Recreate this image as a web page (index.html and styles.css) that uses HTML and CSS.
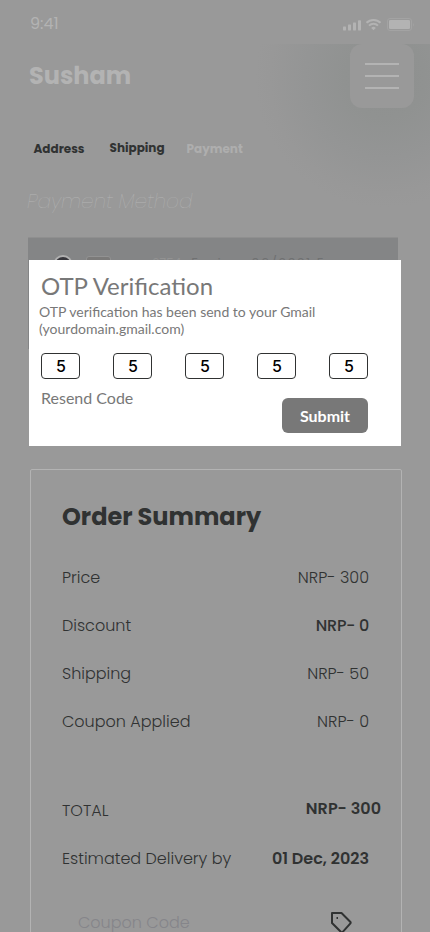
FILE: index.html
```html
<!DOCTYPE html>
<html lang="en">
<head>
<meta charset="utf-8">
<meta name="viewport" content="width=device-width, initial-scale=1">
<title>Susham – Payment</title>
<link rel="stylesheet" href="styles.css">
</head>
<body>
<div class="screen">
  <div class="status">
    <span class="time">9:41</span>
    <svg class="status-icons" width="72" height="16" viewBox="0 0 72 16" fill="#b3b3b3">
      <rect x="0" y="9.5" width="3" height="4" rx=".7"/>
      <rect x="5" y="7.5" width="3" height="6" rx=".7"/>
      <rect x="10" y="5.5" width="3" height="8" rx=".7"/>
      <rect x="15" y="3.3" width="3" height="10.200" rx=".7"/>
      <g fill="none" stroke="#b3b3b3" stroke-width="2">
        <path d="M23.500 5.800a10 10 0 0 1 14 0"/>
        <path d="M26 8.600a6.500 6.500 0 0 1 9 0"/>
      </g>
      <path d="M28.200 10.900a3.400 3.400 0 0 1 4.600 0L30.500 13.200z"/>
      <rect x="44.500" y="1.500" width="24" height="12" rx="2.500" fill="none" stroke="#a3a3a3"/>
      <rect x="46" y="3" width="21" height="9" rx="1.300"/>
      <path d="M70 5.500q1.500 2 0 4z" fill="#a3a3a3"/>
    </svg>
  </div>

  <div class="page">
    <header class="header">
      <h1 class="brand">Susham</h1>
      <button class="menu" aria-label="Menu"><i></i><i></i><i></i></button>
    </header>

    <nav class="steps">
      <span class="step step-address">Address</span>
      <span class="step step-shipping">Shipping</span>
      <span class="step step-payment">Payment</span>
    </nav>

    <h2 class="method">Payment Method</h2>

    <section class="card">
      <span class="radio"></span>
      <span class="chip"></span>
      <span class="number">6754</span>
      <span class="expires">Expires 06/2021 E</span>
    </section>

    <section class="summary">
      <h2>Order Summary</h2>
      <div class="row"><span>Price</span><span>NRP- 300</span></div>
      <div class="row"><span>Discount</span><span class="medium">NRP- 0</span></div>
      <div class="row"><span>Shipping</span><span>NRP- 50</span></div>
      <div class="row"><span>Coupon Applied</span><span>NRP- 0</span></div>
      <div class="row total"><span>TOTAL</span><span class="bold total-amount">NRP- 300</span></div>
      <div class="row"><span>Estimated Delivery by</span><span class="bold">01 Dec, 2023</span></div>
      <div class="coupon">
        <span>Coupon Code</span>
        <svg width="24" height="24" viewBox="0 0 24 24" fill="none" stroke="#303232" stroke-width="2" stroke-linejoin="round">
          <path d="M3 2h9.500l8.700 8.700q.9 1 0 2L13.800 20.800q-1 .8-2 0L3 12z"/>
          <path d="M7.500 7h1.500" />
        </svg>
      </div>
    </section>
  </div>

  <div class="modal" role="dialog">
    <h2>OTP Verification</h2>
    <p>OTP verification has been send to your Gmail<br>(yourdomain.gmail.com)</p>
    <div class="digits"><span>5</span><span>5</span><span>5</span><span>5</span><span>5</span></div>
    <div class="actions">
      <a class="resend">Resend Code</a>
      <button class="submit">Submit</button>
    </div>
  </div>
</div>
</body>
</html>
```
FILE: styles.css
```css
* { box-sizing: border-box; margin: 0; padding: 0; }
html, body { height: 932px; overflow: hidden; }
body {
  width: 430px;
  background: #999;
  color: #303232;
  font-family: Poppins, Inter, sans-serif;
}
button { border: 0; font: inherit; }
.screen { position: relative; width: 430px; height: 932px; overflow: hidden; }

.status {
  height: 44px;
  padding: 14px 15px 0 30px;
  display: flex;
  justify-content: space-between;
  align-items: flex-start;
}
.time { font-size: 16px; line-height: 20px; color: #b3b3b3; }
.status-icons { margin-top: 3px; }

.page {
  height: 888px;
  background: radial-gradient(circle at 385px 34px, #8e908f 0, #909291 40px, #949595 80px, #989898 115px, #999 130px);
}
.header { display: flex; justify-content: space-between; height: 64px; padding: 0 16px 0 29px; }
.brand { font-size: 24px; line-height: 64px; color: #b3b3b3; }
.menu {
  width: 64px;
  height: 64px;
  border-radius: 12px;
  background: #999;
  display: flex;
  flex-direction: column;
  align-items: center;
  justify-content: center;
  gap: 10px;
}
.menu i { width: 34px; height: 2px; background: #b3b3b3; }

.steps { display: flex; height: 20px; margin: 31px 0 0 33.500px; }
.step { font-size: 12px; font-weight: 700; line-height: 20px; white-space: nowrap; }
.step-address { width: 76px; }
.step-shipping { width: 77px; margin-top: -1px; }
.step-payment { color: #aeaeae; }

.method {
  margin: 27px 0 0 27px;
  font-size: 20px;
  font-weight: 200;
  font-style: italic;
  line-height: 30px;
  color: #b3b3b3;
}

.card {
  width: 370px;
  height: 112px;
  margin: 21px 0 0 28px;
  padding: 17px 0 0 25px;
  background: #848586;
  border-top: 1px solid #8f8f8f;
  display: flex;
  align-items: flex-start;
}
.radio { width: 20px; height: 20px; border: 2px solid #b0b0b0; border-radius: 50%; background: #37363b; }
.chip { width: 25px; height: 18px; margin: 1px 0 0 13px; border: 1px solid #929292; border-radius: 3px; background: #7b7a79; }
.number { margin-left: 41px; font-size: 12px; line-height: 16px; color: #929292; }
.expires { margin-left: 10px; font-size: 13px; line-height: 16px; letter-spacing: 1.5px; color: #707172; }

.summary {
  width: 372px;
  height: 520px;
  margin: 120px 0 0 30px;
  padding: 31px 32px 0 31px;
  border: 1px solid #b3b3b3;
  border-radius: 2px;
}
.summary h2 { font-size: 24px; line-height: 32px; margin-bottom: 21px; }
.row {
  display: flex;
  justify-content: space-between;
  height: 48px;
  line-height: 48px;
  font-size: 16px;
  font-weight: 300;
  white-space: nowrap;
}
.total { margin-top: 41px; }
.medium { font-weight: 500; letter-spacing: -.3px; }
.bold { font-weight: 600; }
.total-amount { margin: -2px -12px 0 0; }
.coupon {
  display: flex;
  justify-content: space-between;
  margin: 28px 16px 0 16px;
  line-height: 24px;
  font-size: 16px;
  font-weight: 300;
  color: #85858a;
}

.modal {
  position: absolute;
  left: 29px;
  top: 260px;
  width: 372px;
  height: 186px;
  padding: 11px 33px 0 12px;
  background: #fff;
  color: #787878;
  font-family: Lato, sans-serif;
}
.modal h2 { font-size: 24px; font-weight: 400; line-height: 30px; }
.modal p { margin: 2px 0 0 -2px; font-size: 14px; line-height: 17px; white-space: nowrap; }
.digits { display: flex; justify-content: space-between; margin-top: 16px; }
.digits span {
  width: 39px;
  height: 26px;
  padding-left: 1px;
  border: 1px solid #303232;
  border-radius: 4px;
  color: #000;
  font: 500 16px/25px Inter, sans-serif;
  text-align: center;
}
.actions { display: flex; justify-content: space-between; margin-top: 9px; }
.resend { font-size: 16px; line-height: 20px; }
.submit {
  width: 86px;
  height: 35px;
  margin-top: 10px;
  border-radius: 6px;
  background: #787878;
  color: #fff;
  font-size: 16px;
  font-weight: 700;
}
```
